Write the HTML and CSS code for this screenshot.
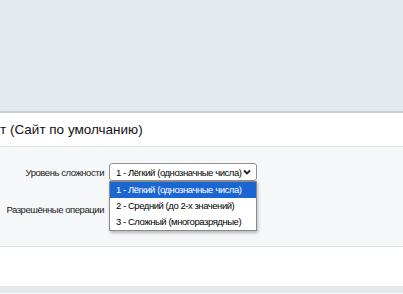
FILE: index.html
```html
<!DOCTYPE html>
<html lang="ru">

<head>
    <meta charset="UTF-8">
    <meta name="viewport" content="width=device-width, initial-scale=1.0">
    <title>Настройки модуля</title>
    <link rel="stylesheet" href="styles.css">
</head>

<body>
    <div class="top-band"></div>

    <div class="page-title">т (Сайт по умолчанию)</div>

    <div class="settings-form">
        <div class="form-row">
            <div class="form-label">Уровень сложности</div>
            <div class="select-wrap">
                <div class="select-box">
                    <span>1 - Лёгкий (однозначные числа)</span>
                    <svg class="chevron" width="8" height="6" viewBox="0 0 8 6">
                        <path d="M1 1.5 L4 4.5 L7 1.5" fill="none" stroke="#222" stroke-width="1.8"/>
                    </svg>
                </div>
                <!-- открытый список -->
                <div class="select-list">
                    <div class="select-option selected">1 - Лёгкий (однозначные числа)</div>
                    <div class="select-option">2 - Средний (до 2-х значений)</div>
                    <div class="select-option">3 - Сложный (многоразрядные)</div>
                </div>
            </div>
        </div>
        <div class="form-row">
            <div class="form-label">Разрешённые операции</div>
            <div class="select-wrap">
                <div class="select-box"></div>
            </div>
        </div>
    </div>

    <div class="empty-area"></div>
    <div class="bottom-band"></div>
</body>

</html>
```

FILE: styles.css
```css
body {
    font-family: "Liberation Sans", Arial, sans-serif;
    margin: 0;
    padding: 0;
    width: 403px;
    height: 294px;
    overflow: hidden;
    background-color: #fff;
    color: #000;
}

.top-band {
    height: 111px;
    background-color: #e3e9ec;
    border-bottom: 2px solid #cbd2d5;
}

.page-title {
    height: 33px;
    line-height: 33px;
    font-size: 13.5px;
    color: #111;
    background-color: #fff;
    border-bottom: 1px solid #dde2e4;
    white-space: nowrap;
}

.settings-form {
    height: 83px;
    padding-top: 16px;
    background-color: #f5f7f8;
    border-bottom: 1px solid #dde2e4;
}

.form-row {
    display: flex;
    align-items: center;
    gap: 5px;
    margin-bottom: 19px;
}

.form-label,
.select-box,
.select-option {
    font-size: 9.5px;
    letter-spacing: -0.45px;
    white-space: nowrap;
}

.form-label {
    width: 104px;
    text-align: right;
    color: #1a1a1a;
}

.select-wrap {
    position: relative;
}

.select-box {
    display: flex;
    align-items: center;
    justify-content: space-between;
    box-sizing: border-box;
    width: 148px;
    height: 18px;
    padding: 0 5px 0 6px;
    background-color: #fff;
    border: 1px solid #8f8f8f;
    border-radius: 3px;
}

.chevron {
    flex-shrink: 0;
}

.select-list {
    position: absolute;
    top: 18px;
    left: 0;
    width: 148px;
    box-sizing: border-box;
    background-color: #fff;
    border: 1px solid #8a8a8a;
    box-shadow: 1px 2px 3px rgba(0, 0, 0, 0.25);
    z-index: 2;
}

.select-option {
    height: 16px;
    line-height: 16px;
    padding-left: 6px;
}

.select-option.selected {
    background-color: #1a66d2;
    color: #fff;
}

.empty-area {
    height: 39px;
    background-color: #fff;
}

.bottom-band {
    height: 7px;
    background-color: #e3e9ec;
}
```
